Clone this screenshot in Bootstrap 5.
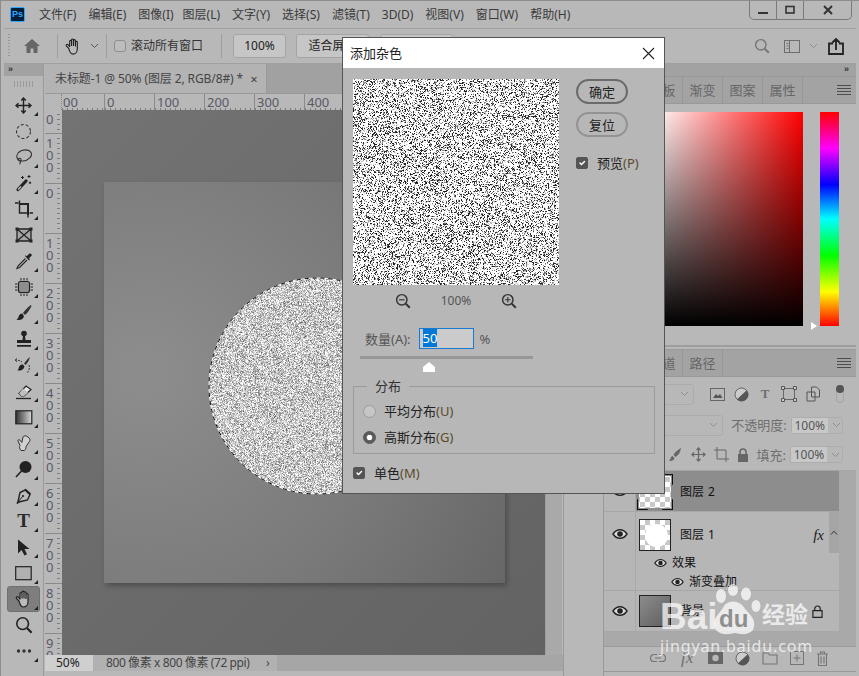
<!DOCTYPE html>
<html lang="zh-CN">
<head>
    <meta charset="UTF-8">
    <title>添加杂色</title>
    <link href="https://cdn.jsdelivr.net/npm/bootstrap@5.3.0/dist/css/bootstrap.min.css" rel="stylesheet">
    <style>
        html, body { margin: 0; background: #b8b8b8; overflow: hidden; }
        body { font: 12px/16px "Noto Sans", "Noto Sans CJK SC", sans-serif; color: #333; }
        svg { display: block; flex: none; }
        .ps-win { position: relative; width: 859px; height: 676px; overflow: hidden; background: #b8b8b8; border: 1px solid #8d8d8d; border-width: 1px 0 0 1px; }

        /* title bar */
        .titlebar { height: 27px; padding-left: 9px; }
        .ps-logo { width: 15px; height: 15px; background: #001e36; border: 1px solid #31a8ff; border-radius: 2px; color: #31a8ff; font: bold 9px/13px "Liberation Sans", sans-serif; text-align: center; margin-right: 14px; }
        .menu { gap: 12px; color: #3a3a3a; margin-top: 1px; }
        .menu .tight { margin-right: -3px; }
        .win-btns { margin: -1px 7px 0 auto; height: 20px; border: 1px solid #7a7a7a; border-top: 0; border-radius: 0 0 5px 5px; align-self: flex-start; }
        .win-btns > div { height: 19px; border-right: 1px solid #7a7a7a; width: 27px; }
        .win-btns > div:last-child { border-right: 0; width: 47px; }

        /* options bar */
        .optbar { height: 36px; margin: 0 3px; border: 1px solid #a0a0a0; border-width: 1px 0; }
        .grip { width: 2px; height: 24px; margin-left: 4px; background: repeating-linear-gradient(#969696 0 1px, transparent 1px 3px); }
        .sep { width: 1px; height: 24px; background: #9e9e9e; }
        .pbtn { height: 24px; border: 1px solid #a4a4a4; border-radius: 3px; background: #c6c6c6; color: #222; text-align: center; line-height: 22px; }
        .home { margin: 0 16px 0 13px; }
        .hand-opt { margin: 0 7px 0 6px; }
        .chev { margin-right: 7px; }
        .optbar .form-check-input { flex: none; width: 12px; height: 12px; margin: 0 5px 0 7px; background-color: #bdbdbd; border-color: #8e8e8e; border-radius: 3px; }
        .optbar .sep2 { margin: 0 11px 0 18px; }
        .b100 { width: 53px; margin-right: 10px; }
        .bfit { width: 73px; margin-right: 11px; }
        .opt-right { margin-left: auto; margin-right: 12px; }
        .opt-search { margin-right: 14px; }
        .opt-ws { margin-right: 9px; }
        .opt-chev { margin-right: 10px; }

        /* main row */
        .mainrow { height: 612px; margin-left: 3px; }
        .toolcol { width: 40px; border-right: 1px solid #9a9a9a; }
        .dock-head { height: 12px; background: #a2a2a2; color: #333; font: bold 9px/11px "Liberation Sans", sans-serif; letter-spacing: -1px; padding-left: 4px; }
        .toolgrip { height: 16px; }
        .toolgrip i { width: 20px; height: 6px; background: repeating-linear-gradient(90deg, #9a9a9a 0 1px, transparent 1px 3px); }
        .tool { height: 26px; position: relative; width: 33px; margin-left: 3px; border-radius: 3px; border: 1px solid transparent; }
        .tool.more::after { content: ""; position: absolute; right: 1px; bottom: 1px; border: 2px solid transparent; border-right-color: #222; border-bottom-color: #222; }
        .tool.active { background: #7e7e7e; border-color: #6f6f6f; }
        .t-letter { font: bold 19px/20px "Liberation Serif", serif; color: #2a2a2a; }

        .docarea { width: 518px; margin-left: 1px; }
        .doctabs { height: 29px; background: #a1a1a1; }
        .doctab { width: 222px; background: #b3b3b3; padding-left: 10px; color: #444; border-right: 1px solid #999; letter-spacing: -.1px; }
        .doctab span + span { margin-left: 7px; font-size: 13px; }
        .hruler { height: 17px; background: #b8b8b8; border-top: 1px solid #999; }
        .rcorner { width: 17px; background: #b8b8b8; border-right: 1px dotted #888; }
        .htick { background: repeating-linear-gradient(90deg, #7d7d7d 0 1px, transparent 1px 5px) bottom left / 100% 2px no-repeat; }
        .h-first { width: 42px; padding-left: 1px; }
        .h-cell { width: 50px; border-left: 1px solid #8a8a8a; padding-left: 2px; }
        .hruler span { font-size: 13px; line-height: 16px; color: #5a5966; }
        .docbody { height: 545px; }
        .vruler { width: 17px; overflow: hidden; background: #b8b8b8; }
        .v-cell { height: 50px; border-top: 1px solid #8a8a8a; padding-left: 1px; font-size: 13px; line-height: 12px; color: #5a5966;
                  background: repeating-linear-gradient(#7d7d7d 0 1px, transparent 1px 5px) right 2px top 4px / 3px 100% no-repeat; }
        .v-first { height: 23px; border-top: 0; }
        .v-digit { padding-top: 3px; }
        .canvasarea { width: 483px; background: linear-gradient(135deg, #737373, #636363); padding: 72px 0 0 42px; overflow: hidden; }
        .doc { position: relative; width: 401px; height: 401px; box-shadow: 2px 3px 5px rgba(0,0,0,.25); }
        .doc canvas { position: absolute; left: 0; top: 0; }
        .vscroll { width: 17px; background: #a9a9a9; border-left: 1px solid #9d9d9d; }
        .statusbar { height: 16px; background: #a6a6a6; }
        .st-zoom { width: 48px; background: #cfcfcf; color: #222; padding-left: 11px; }
        .st-info { width: 184px; background: #b1b1b1; color: #444; padding-left: 13px; letter-spacing: -.4px; }
        .st-next { margin-left: -11px; color: #444; }

        .midstrip { width: 41px; border-left: 1px solid #9a9a9a; border-right: 1px solid #9a9a9a; }

        /* right panels */
        .rightcol { width: 252px; }
        .ptabs { height: 28px; background: #a3a3a3; border-top: 1px solid #999; border-bottom: 1px solid #999; color: #666; }
        .ptab { width: 40px; text-align: center; border-right: 1px solid #979797; font-size: 13px; line-height: 27px; }
        .pad-left { width: 39px; }
        .p-menu { margin: 0 4px 0 auto; }
        .colorpanel { height: 243px; padding: 8px 0 0 48px; border-bottom: 2px solid #9d9d9d; }
        .sv { width: 151px; height: 214px; background: linear-gradient(transparent, #000), linear-gradient(90deg, #fff, #f00); }
        .hue { position: relative; width: 19px; height: 214px; margin-left: 17px; background: linear-gradient(#f00, #f0f 17%, #00f 34%, #0ff 50%, #0f0 67%, #ff0 84%, #f00); }
        .hue::after { content: ""; position: absolute; left: -9px; bottom: -4px; border: 4px solid transparent; border-left: 6px solid #fff; }
        .gapline { height: 2px; }
        .l-tabs { height: 28px; }
        .l-row1 { height: 34px; }
        .l-row2 { height: 28px; }
        .l-row3 { height: 32px; border-bottom: 1px solid #a5a5a5; }
        .sel { height: 21px; border: 1px solid #ababab; border-radius: 3px; }
        .sel1 { width: 90px; }
        .sel2 { width: 121px; }
        .l-icons { margin-left: 11px; }
        .icell { width: 24px; }
        .lbl { color: #6e6e6e; font-size: 13px; }
        .numbox { height: 17px; border: 1px solid #adadad; border-radius: 2px; width: 53px; margin: 0 13px 0 4px; color: #555; }
        .numbox span { width: 36px; background: #c8c8c8; text-align: center; line-height: 15px; }
        .pill { width: 8px; height: 18px; border-radius: 5px; border: 1px solid #a5a5a5; position: relative; margin-left: 11px; }
        .pill::before { content: ""; position: absolute; top: -1px; left: -1px; width: 8px; height: 8px; border-radius: 50%; background: #555; }

        .layers { height: 175px; background: #b6b6b6; }
        .layer-list { width: 235px; border-right: 0; }
        .lscroll { width: 17px; background: #a9a9a9; }
        .lrow { border-bottom: 1px solid #a7a7a7; }
        .eyecol { width: 32px; border-right: 1px solid #a9a9a9; }
        .lr-sel { height: 41px; }
        .lr-sel .lbody { background: #8d8d8d; padding-top: 2px; }
        .lr-fx { height: 79px; }
        .lr-bg { height: 41px; }
        .lbody { height: 100%; padding-left: 3px; color: #111; position: relative; }
        .thumb { position: relative; width: 32px; height: 32px; border: 1px solid #222; margin-right: 9px; }
        .thumb.picked { border-color: transparent; }
        .thumb.picked::after { content: ""; position: absolute; inset: -3px; border: 1px solid #111; clip-path: polygon(0 0, 30% 0, 30% 8%, 70% 8%, 70% 0, 100% 0, 100% 30%, 92% 30%, 92% 70%, 100% 70%, 100% 100%, 70% 100%, 70% 92%, 30% 92%, 30% 100%, 0 100%, 0 70%, 8% 70%, 8% 30%, 0 30%); }
        .checker { background: repeating-conic-gradient(#c8c8c8 0 25%, #fff 0 50%) 0 0 / 10px 10px; }
        .thumb-spot { background: radial-gradient(circle at 55% 52%, #fff 0 11px, transparent 12px), repeating-conic-gradient(#c8c8c8 0 25%, #fff 0 50%) 0 0 / 10px 10px; }
        .thumb-grad { background: linear-gradient(135deg, #8c8c8c, #5e5e5e); }
        .lname b { font-weight: 400; margin-left: 4px; }
        .fxmark { margin-left: auto; font: italic 15px/16px "Liberation Serif", serif; color: #222; margin-right: 5px; }
        .fxarrow { width: 10px; height: 41px; background: #a5a5a5; }
        .fxsub { padding-left: 18px; color: #111; height: 19px; }
        .fxsub.two { padding-left: 35px; }
        .fxsub svg { margin-right: 5px; }
        .lfoot { height: 26px; padding-bottom: 2px; border-top: 1px solid #9a9a9a; border-bottom: 1px solid #9a9a9a; gap: 12px; padding-left: 46px; }
        .lfoot .fxmark { color: #6f6f6f; margin: 0 3px 0 3px; font-size: 17px; }
        .lempty { background: #a9a9a9; flex: 1; }

        /* the filter dialog */
        .dialog { position: absolute; left: 341px; top: 36px; width: 323px; height: 457px; background: #b7b7b7; border: 1px solid #555; z-index: 5; }
        .dlg-title { height: 30px; background: #fff; padding: 0 9px 0 7px; font-size: 13px; color: #222; }
        .dlg-top { padding: 11px 0 0 10px; }
        .preview { width: 206px; height: 206px; display: block; }
        .dlg-side { margin-left: 17px; width: 64px; }
        .rbtn { display: block; width: 52px; height: 25px; padding: 0; font-size: 13px; line-height: 20px; color: #222; background: transparent; border-radius: 13px; }
        .rbtn.primary { border: 2px solid #6b6b6b; }
        .rbtn.plain { border: 2px solid #939393; margin-top: 8px; }
        .dialog .form-check-input { flex: none; width: 12px; height: 12px; margin: 0; border-radius: 2px; }
        .dialog .form-check-input:checked { background-color: #555; border-color: #555; }
        .c-mn { color: #5b4a2a; }
        .check-row { margin-top: 18px; gap: 9px; color: #222; white-space: nowrap; font-size: 13px; }
        .zoomrow { width: 206px; height: 16px; margin: 8px 0 0 10px; padding: 0 42px; color: #555; font-size: 12px; }
        .amount { margin: 19px 0 0 22px; height: 21px; color: #555; font-size: 13px; }
        .amount .numin { width: 55px; height: 21px; margin: 0 6px 0 8px; border: 1px solid #1a7ad0; background: #cbcbcb; padding: 0 0 0 3px; line-height: 19px; font-size: 13px; }
        .numin mark { padding: 0; background: #0078d7; color: #fff; }
        .track { width: 173px; height: 3px; background: #979797; margin: 7px 0 0 17px; }
        .thumbtri { width: 12px; height: 10px; margin: 3px 0 0 80px; background: #fff; clip-path: polygon(50% 0, 100% 50%, 100% 100%, 0 100%, 0 50%); }
        .dist { position: relative; margin: 14px 9px 0 10px; height: 68px; border: 1px solid #9b9b9b; padding: 11px 0 0 9px; }
        .dist legend { position: absolute; float: none; left: 13px; top: -9px; width: auto; margin: 0; padding: 0 8px; background: #b7b7b7; font-size: 13px; line-height: 16px; color: #333; }
        .radio-row { height: 26px; gap: 8px; color: #222; font-size: 13px; }
        .radio { width: 13px !important; height: 13px !important; border-radius: 50% !important; background-color: #c6c6c6; border: 1px solid #9c9c9c; }
        .radio:checked { background-color: #5a5a5a !important; border-color: #5a5a5a !important; }
        .mono-row { margin: 11px 0 0 10px; }

        /* baidu watermark */
        .watermark { position: absolute; left: 659px; top: 583px; width: 160px; z-index: 6; color: rgba(255,255,255,.72); pointer-events: none; }
        .wm-top { height: 53px; }
        .wm-bai { position: absolute; left: 0; top: 13px; font: bold 37px/40px "Liberation Sans", sans-serif; }
        .wm-paw { position: absolute; left: 50px; top: 0; }
        .wm-jy { position: absolute; left: 102px; top: 15px; font: bold 23px/28px "Noto Sans CJK SC", sans-serif; }
        .wm-url { font: 16px/18px "Noto Sans", sans-serif; letter-spacing: .85px; white-space: nowrap; }
    </style>
</head>
<body>
<svg width="0" height="0" style="position:absolute">
    <symbol id="hand" viewBox="0 0 20 20"><path d="M5 12 2.600 9.500c-1-1.200.5-2.400 1.600-1.400L6 10V4.600c0-1.400 2-1.400 2 0V9 3.200c0-1.500 2-1.500 2 0V9 3.800c0-1.400 2-1.400 2 0V9.400 5.600c0-1.300 2-1.300 2 0v7.200c0 3-2 5.200-4.600 5.200-2.300 0-3.300-1.300-4.400-6z" fill="#bbb" stroke="#222" stroke-width="1.200" stroke-linejoin="round"/></symbol>
    <symbol id="eye" viewBox="0 0 16 12"><path d="M1 6c2-3 4.500-4.300 7-4.300S13 3 15 6c-2 3-4.500 4.300-7 4.300S3 9 1 6z" fill="#ddd" stroke="#222" stroke-width="1.400"/><circle cx="8" cy="6" r="2.800" fill="#222"/></symbol>
    <symbol id="mag" viewBox="0 0 20 20"><circle cx="8.500" cy="8.500" r="6.500" fill="none" stroke="currentColor" stroke-width="1.800"/><path d="M13.500 13.500 18.500 18.500" stroke="currentColor" stroke-width="2.400"/></symbol>
    <symbol id="menuic" viewBox="0 0 16 12"><path d="M1 1.500h14M1 4.500h14M1 7.500h14M1 10.500h14" stroke="#4d4d4d" stroke-width="1"/></symbol>
</svg>
<div class="ps-win d-flex flex-column">
    <!-- title bar + menus -->
    <div class="titlebar d-flex align-items-center">
        <div class="ps-logo">Ps</div>
        <div class="menu d-flex">
            <span>文件(F)</span><span>编辑(E)</span><span class="tight">图像(I)</span><span>图层(L)</span><span>文字(Y)</span><span>选择(S)</span><span>滤镜(T)</span><span>3D(D)</span><span>视图(V)</span><span>窗口(W)</span><span>帮助(H)</span>
        </div>
        <div class="win-btns d-flex">
            <div class="d-flex align-items-center justify-content-center"><svg width="12" height="12"><rect x="1" y="8" width="10" height="2" fill="#333"/></svg></div>
            <div class="d-flex align-items-center justify-content-center"><svg width="12" height="12"><rect x="2" y="2.500" width="8" height="6.500" fill="none" stroke="#333" stroke-width="1.600"/></svg></div>
            <div class="d-flex align-items-center justify-content-center"><svg width="12" height="12"><path d="M2 2 10 10M10 2 2 10" stroke="#333" stroke-width="2"/></svg></div>
        </div>
    </div>

    <!-- options bar -->
    <div class="optbar d-flex align-items-center">
        <div class="grip"></div>
        <svg class="home" width="18" height="16" viewBox="0 0 18 16"><path d="M9 1 1 8h2.500v7h4v-4.500h3V15h4V8H17z" fill="#666"/></svg>
        <div class="sep"></div>
        <svg class="hand-opt" width="19" height="19"><use href="#hand"/></svg>
        <svg class="chev" width="9" height="6" viewBox="0 0 9 6"><path d="M1 1 4.500 4.500 8 1" fill="none" stroke="#555"/></svg>
        <div class="sep"></div>
        <input class="form-check-input" type="checkbox">
        <span class="text-nowrap">滚动所有窗口</span>
        <div class="sep sep2"></div>
        <div class="pbtn b100">100%</div>
        <div class="pbtn bfit">适合屏幕</div>
        <div class="pbtn bfit">填充屏幕</div>
        <div class="opt-right d-flex align-items-center">
            <svg class="opt-search" width="16" height="16" style="color:#777"><use href="#mag"/></svg>
            <svg class="opt-ws" width="16" height="13" viewBox="0 0 16 13"><rect x=".5" y=".5" width="15" height="12" fill="none" stroke="#6e6e6e"/><path d="M2.500 3.500h2M2.500 6h2M2.500 8.500h2M5.500 1v11" stroke="#6e6e6e"/></svg>
            <svg class="opt-chev" width="9" height="6" viewBox="0 0 9 6"><path d="M1 1 4.500 4.500 8 1" fill="none" stroke="#8e8e8e"/></svg>
            <svg width="16" height="17" viewBox="0 0 16 17"><path d="M5 5.500H1v10.500h14V5.500h-4M8 12V1.500M4.500 4.500 8 1l3.500 3.500" fill="none" stroke="#222" stroke-width="1.800"/></svg>
        </div>
    </div>

    <div class="mainrow d-flex">
        <!-- tools -->
        <div class="toolcol d-flex flex-column">
            <div class="dock-head">››</div>
            <div class="toolgrip d-flex align-items-center justify-content-center"><i></i></div>
            <div class="tool more d-flex align-items-center justify-content-center"><svg width="17" height="17" viewBox="0 0 17 17"><path d="M8.500 1v15M1 8.500h15M6.300 3.500 8.500 1l2.200 2.500M6.300 13.500l2.200 2.500 2.200-2.500M3.500 6.300 1 8.500l2.500 2.200M13.500 6.300 16 8.500l-2.500 2.200" fill="none" stroke="#222" stroke-width="1.400"/></svg></div>
            <div class="tool more d-flex align-items-center justify-content-center"><svg width="17" height="17" viewBox="0 0 17 17"><circle cx="8.500" cy="8.500" r="7" fill="none" stroke="#333" stroke-width="1.100" stroke-dasharray="3 2"/></svg></div>
            <div class="tool more d-flex align-items-center justify-content-center"><svg width="18" height="18" viewBox="0 0 18 18"><path d="M4.500 13C1.500 11 .8 7.500 3.500 4.500 7 1 14 1 16 4.500S13.500 12.500 8 13c-2 .2-4 0-4.500-1.500-.3-1.200 2-1.800 2.500-.2.400 1.500-.5 3-1.500 5" fill="none" stroke="#333" stroke-width="1.100"/></svg></div>
            <div class="tool more d-flex align-items-center justify-content-center"><svg width="18" height="18" viewBox="0 0 18 18"><path d="M3 15.500 11 7" stroke="#222" stroke-width="3.200" stroke-linecap="round"/><path d="M3 15.500 6 12.300" stroke="#ccc" stroke-width="1.200"/><path d="M7.500 2v3M6 3.500h3M14 1v3M12.500 2.500h3M15 7.500v2.500M13.800 8.800h2.400" stroke="#222"/></svg></div>
            <div class="tool more d-flex align-items-center justify-content-center"><svg width="20" height="18" viewBox="0 0 20 18"><path d="M1 3h3.500M5.500 .5V13h10" fill="none" stroke="#222" stroke-width="1.400"/><path d="M5.500 4H14v11" fill="none" stroke="#222" stroke-width="2"/><path d="M14 14.500V17.500M16 13h3" stroke="#222" stroke-width="1.400"/></svg></div>
            <div class="tool d-flex align-items-center justify-content-center"><svg width="18" height="16" viewBox="0 0 18 16"><path d="M2 2h14v12H2zM2 2l14 12M16 2 2 14" fill="#a5a5a5" stroke="#222" stroke-width="1.300"/><path d="M.5.500h3v3h-3zM14.500.500h3v3h-3zM.5 12.500h3v3h-3zM14.500 12.500h3v3h-3z" fill="#222"/></svg></div>
            <div class="tool more d-flex align-items-center justify-content-center"><svg width="18" height="18" viewBox="0 0 18 18"><path d="M10.500 6.500 3 14l-1 2.500L4.500 15.500 12 8" fill="#cfcfcf" stroke="#222" stroke-width="1.200"/><path d="M10 4 14 8.500l1-1.300-1-1 2.500-2.500c1-1.300-1-3-2.300-2l-2.500 2.500-1-1z" fill="#222"/></svg></div>
            <div class="tool more d-flex align-items-center justify-content-center"><svg width="18" height="18" viewBox="0 0 18 18"><rect x="3.500" y="3.500" width="11" height="11" rx="2" fill="#8e8e8e" stroke="#222" stroke-width="1.100"/><path d="M6 0v2.500M9 0v2.500M12 0v2.500M6 15.500V18M9 15.500V18M12 15.500V18M0 6h2.500M0 9h2.500M0 12h2.500M15.500 6H18M15.500 9H18M15.500 12H18" stroke="#222"/></svg></div>
            <div class="tool more d-flex align-items-center justify-content-center"><svg width="18" height="18" viewBox="0 0 18 18"><path d="M16 1c-2.500 1.500-6 5-8 8l2 2c2.500-2.200 5-5.500 6.500-9z" fill="#333"/><path d="M7.500 9.500C5 9.500 4 11 3.500 13c-.3 1.300-1 2-2 2.500 2.500 1.200 6.500.5 7.500-3z" fill="#222"/></svg></div>
            <div class="tool more d-flex align-items-center justify-content-center"><svg width="18" height="18" viewBox="0 0 18 18"><circle cx="9" cy="3.500" r="2.800" fill="#222"/><path d="M8 5.500h2L10.500 10H16v3H2v-3h5.500zM2 15h14v1.800H2z" fill="#222"/></svg></div>
            <div class="tool more d-flex align-items-center justify-content-center"><svg width="19" height="19" viewBox="0 0 19 19"><path d="M16 1c-2 1.500-4.500 4-6 6.500l1.500 1.500C13.500 7.500 15 4.500 16 1z" fill="#333"/><path d="M9 8.500c-2-.5-3.500 1-4 2.500-.3 1.500-.8 2.500-1.500 3.500 3 .5 6-.5 7-4z" fill="#222"/><path d="M1 4c3 0 5 .5 7 2M3 2.500 1 4l2 2M15 9c1 3 0 6-2 8" fill="none" stroke="#333" stroke-dasharray="2 1"/></svg></div>
            <div class="tool more d-flex align-items-center justify-content-center"><svg width="18" height="17" viewBox="0 0 18 17"><path d="M4 10.500 11 3l5 3.500-7 6.500H6.500z" fill="#e8e8e8" stroke="#222" stroke-width="1.200"/><path d="M4 10.500 8 5.500l5 4-4 3.500H6.500z" fill="#c0c0c0"/><path d="M1 15.500h15" stroke="#222" stroke-width="1.300"/></svg></div>
            <div class="tool more d-flex align-items-center justify-content-center"><svg width="18" height="15" viewBox="0 0 18 15"><defs><linearGradient id="gr"><stop offset="0" stop-color="#333"/><stop offset="1" stop-color="#d8d8d8"/></linearGradient></defs><rect x=".8" y=".8" width="16" height="13" fill="url(#gr)" stroke="#222" stroke-width="1.200"/></svg></div>
            <div class="tool more d-flex align-items-center justify-content-center"><svg width="16" height="18" viewBox="0 0 16 18"><path d="M5 16.500c-1.500-2-2-3.500-1-5L2 7c-.5-1 1-2 1.800-1l2 2.500L7 3c.5-1.500 3-1.500 5 0s2.500 3 1.500 4.500L10 12.500c0 2-.5 3-1.500 4z" fill="#d0d0d0" stroke="#333"/></svg></div>
            <div class="tool more d-flex align-items-center justify-content-center"><svg width="18" height="18" viewBox="0 0 18 18"><circle cx="10.500" cy="7" r="6" fill="#222"/><path d="M6.500 11 1 17" stroke="#222" stroke-width="1.600"/></svg></div>
            <div class="tool more d-flex align-items-center justify-content-center"><svg width="17" height="17" viewBox="0 0 17 17"><path d="M10 3 15 7.500 12.500 13 4 15l-2 1.500L3 14.500 5 5.500z" fill="#bbb" stroke="#222" stroke-width="1.400"/><path d="M10.500 1.500 16 6.500 14.500 8 9.500 3z" fill="#222"/><path d="M3 15 7.500 9.500" stroke="#222"/><circle cx="8" cy="9" r="1.100" fill="#222"/></svg></div>
            <div class="tool more d-flex align-items-center justify-content-center"><span class="t-letter">T</span></div>
            <div class="tool more d-flex align-items-center justify-content-center"><svg width="13" height="17" viewBox="0 0 13 17"><path d="M1 .5v14l3.500-3.500 3 5.500 2.500-1.300L7.500 10H12.500z" fill="#222"/></svg></div>
            <div class="tool more d-flex align-items-center justify-content-center"><svg width="17" height="15" viewBox="0 0 17 15"><rect x=".7" y=".7" width="15.500" height="13" fill="#b0b0b0" stroke="#222" stroke-width="1.200"/></svg></div>
            <div class="tool more active d-flex align-items-center justify-content-center"><svg width="20" height="20"><use href="#hand"/></svg></div>
            <div class="tool d-flex align-items-center justify-content-center"><svg width="18" height="18" style="color:#222"><use href="#mag"/></svg></div>
            <div class="tool more d-flex align-items-center justify-content-center"><svg width="16" height="4" viewBox="0 0 16 4"><circle cx="2.500" cy="2" r="1.700" fill="#333"/><circle cx="8" cy="2" r="1.700" fill="#333"/><circle cx="13.500" cy="2" r="1.700" fill="#333"/></svg></div>
        </div>

        <!-- document window -->
        <div class="docarea d-flex flex-column">
            <div class="doctabs d-flex">
                <div class="doctab d-flex align-items-center"><span>未标题-1 @ 50% (图层 2, RGB/8#) *</span><span>×</span></div>
            </div>
            <div class="hruler d-flex">
                <div class="rcorner"></div>
                <div class="h-first htick"><span>00</span></div>
                <div class="h-cell htick"><span>0</span></div>
                <div class="h-cell htick"><span>100</span></div>
                <div class="h-cell htick"><span>200</span></div>
                <div class="h-cell htick"><span>300</span></div>
                <div class="h-cell htick"><span>400</span></div>
                <div class="h-cell htick"><span>500</span></div>
            </div>
            <div class="docbody d-flex">
                <div class="vruler">
                    <div class="v-cell v-first"><div class="v-digit">0</div></div>
                    <div class="v-cell"><div class="v-digit">1<br>0<br>0</div></div>
                    <div class="v-cell"><div class="v-digit">0</div></div>
                    <div class="v-cell"><div class="v-digit">1<br>0<br>0</div></div>
                    <div class="v-cell"><div class="v-digit">2<br>0<br>0</div></div>
                    <div class="v-cell"><div class="v-digit">3<br>0<br>0</div></div>
                    <div class="v-cell"><div class="v-digit">4<br>0<br>0</div></div>
                    <div class="v-cell"><div class="v-digit">5<br>0<br>0</div></div>
                    <div class="v-cell"><div class="v-digit">6<br>0<br>0</div></div>
                    <div class="v-cell"><div class="v-digit">7<br>0<br>0</div></div>
                    <div class="v-cell"><div class="v-digit">8<br>0<br>0</div></div>
                    <div class="v-cell"><div class="v-digit">9<br>0<br>0</div></div>
                </div>
                <div class="canvasarea">
                    <div class="doc"><canvas id="docCanvas" width="401" height="401"></canvas></div>
                </div>
                <div class="vscroll"></div>
            </div>
            <div class="statusbar d-flex">
                <div class="st-zoom">50%</div>
                <div class="st-info text-nowrap">800 像素 x 800 像素 (72 ppi)</div>
                <div class="st-next">›</div>
            </div>
        </div>

        <div class="midstrip"></div>

        <!-- right panels -->
        <div class="rightcol d-flex flex-column">
            <div class="dock-head d-flex justify-content-end pe-2">››</div>
            <div class="ptabs d-flex align-items-stretch">
                <div class="pad-left"></div>
                <div class="ptab">色板</div><div class="ptab">渐变</div><div class="ptab">图案</div><div class="ptab">属性</div>
                <svg class="p-menu align-self-center" width="16" height="12"><use href="#menuic"/></svg>
            </div>
            <div class="colorpanel d-flex">
                <div class="sv"></div>
                <div class="hue"></div>
            </div>
            <div class="gapline"></div>
            <div class="ptabs l-tabs d-flex align-items-stretch">
                <div class="pad-left"></div>
                <div class="ptab">通道</div>
                <div class="ptab">路径</div>
                <svg class="p-menu align-self-center" width="16" height="12"><use href="#menuic"/></svg>
            </div>
            <!-- layer filter row -->
            <div class="l-row1 d-flex align-items-center">
                <div class="sel sel1 d-flex align-items-center justify-content-end pe-1"><svg width="9" height="6" viewBox="0 0 9 6"><path d="M1 1 4.500 4.500 8 1" fill="none" stroke="#8e8e8e"/></svg></div>
                <div class="l-icons d-flex align-items-center">
                    <div class="icell d-flex justify-content-center"><svg width="15" height="13" viewBox="0 0 15 13"><rect x=".5" y=".5" width="14" height="12" fill="none" stroke="#666"/><path d="M3 10 6 6l2 2 2-2 2.500 4z" fill="#555"/></svg></div>
                    <div class="icell d-flex justify-content-center"><svg width="15" height="15" viewBox="0 0 15 15"><circle cx="7.500" cy="7.500" r="6.500" fill="#ccc" stroke="#666"/><path d="M12.500 3.400A6.500 6.500 0 0 1 3 12.300z" fill="#555"/></svg></div>
                    <div class="icell d-flex justify-content-center"><span class="t-letter lbl">T</span></div>
                    <div class="icell d-flex justify-content-center"><svg width="16" height="16" viewBox="0 0 16 16"><rect x="2.500" y="2.500" width="11" height="11" fill="none" stroke="#666"/><path d="M.5.500h3v3h-3zM12.500.500h3v3h-3zM.5 12.500h3v3h-3zM12.500 12.500h3v3h-3z" fill="#ccc" stroke="#555"/></svg></div>
                    <div class="icell d-flex justify-content-center"><svg width="15" height="16" viewBox="0 0 15 16"><path d="M5.500 1h5l3 3v7h-8zM1 6h8v9H1z" fill="#bbb" stroke="#555"/></svg></div>
                </div>
                <div class="pill"></div>
            </div>
            <!-- opacity row -->
            <div class="l-row2 d-flex align-items-center">
                <div class="sel sel2 d-flex align-items-center justify-content-end pe-1"><svg width="9" height="6" viewBox="0 0 9 6"><path d="M1 1 4.500 4.500 8 1" fill="none" stroke="#8e8e8e"/></svg></div>
                <span class="lbl ms-2 text-nowrap">不透明度:</span>
                <div class="numbox d-flex align-items-center"><span>100%</span><svg class="ms-1" width="9" height="6" viewBox="0 0 9 6"><path d="M1 1 4.500 4.500 8 1" fill="none" stroke="#8e8e8e"/></svg></div>
            </div>
            <!-- lock row -->
            <div class="l-row3 d-flex align-items-center">
                <svg class="ms-auto" width="15" height="15" viewBox="0 0 15 15"><path d="M13 1C9 3 6.500 6 5.500 8l2 2c2.500-1.500 5-4.500 5.500-9zM4.500 9c-1.500.5-2 2-2 3l-1.500 2c3 .5 5-1 5.500-3z" fill="#666"/></svg>
                <svg class="ms-2" width="15" height="15" viewBox="0 0 17 17"><path d="M8.500 1v15M1 8.500h15M6.300 3.500 8.500 1l2.200 2.500M6.300 13.500l2.200 2.500 2.200-2.500M3.500 6.300 1 8.500l2.500 2.200M13.500 6.300 16 8.500l-2.500 2.200" fill="none" stroke="#666" stroke-width="1.400"/></svg>
                <svg class="ms-2" width="15" height="15" viewBox="0 0 15 15"><path d="M0 3h12v12M3 0v12h12" fill="none" stroke="#666"/></svg>
                <svg class="ms-2" width="12" height="14" viewBox="0 0 12 14"><path d="M3 6V4a3 3 0 0 1 6 0v2" fill="none" stroke="#666" stroke-width="1.500"/><path d="M1 6h10v8H1z" fill="#666"/></svg>
                <span class="lbl ms-2 text-nowrap">填充:</span>
                <div class="numbox d-flex align-items-center"><span>100%</span><svg class="ms-1" width="9" height="6" viewBox="0 0 9 6"><path d="M1 1 4.500 4.500 8 1" fill="none" stroke="#8e8e8e"/></svg></div>
            </div>
            <!-- layers -->
            <div class="layers d-flex">
                <div class="layer-list d-flex flex-column">
                    <div class="lrow lr-sel d-flex">
                        <div class="eyecol d-flex align-items-center justify-content-center"><svg width="16" height="12"><use href="#eye"/></svg></div>
                        <div class="lbody flex-grow-1 d-flex align-items-center"><div class="thumb picked checker"></div><span class="lname">图层<b>2</b></span></div>
                    </div>
                    <div class="lrow lr-fx d-flex">
                        <div class="eyecol d-flex justify-content-center pt-3"><svg width="16" height="12"><use href="#eye"/></svg></div>
                        <div class="flex-grow-1">
                            <div class="d-flex align-items-center">
                                <div class="lbody flex-grow-1 d-flex align-items-center pt-1"><div class="thumb thumb-spot"></div><span class="lname">图层<b>1</b></span><span class="fxmark">fx</span></div>
                                <div class="fxarrow d-flex align-items-center justify-content-center"><svg width="8" height="5" viewBox="0 0 8 5"><path d="M1 4.500 4 1.200 7 4.500" fill="none" stroke="#333"/></svg></div>
                            </div>
                            <div class="fxsub d-flex align-items-center"><svg width="13" height="10"><use href="#eye"/></svg>效果</div>
                            <div class="fxsub two d-flex align-items-center"><svg width="13" height="10"><use href="#eye"/></svg>渐变叠加</div>
                        </div>
                    </div>
                    <div class="lrow lr-bg d-flex">
                        <div class="eyecol d-flex align-items-center justify-content-center"><svg width="16" height="12"><use href="#eye"/></svg></div>
                        <div class="lbody flex-grow-1 d-flex align-items-center"><div class="thumb thumb-grad"></div><span class="lname">背景</span>
                            <svg class="ms-auto me-3" width="11" height="13" viewBox="0 0 12 14"><path d="M3 6V4a3 3 0 0 1 6 0v2" fill="none" stroke="#222" stroke-width="1.300"/><path d="M1 6h10v7.500H1z" fill="none" stroke="#222" stroke-width="1.300"/></svg>
                        </div>
                    </div>
                    <div class="lempty"></div>
                </div>
                <div class="lscroll"></div>
            </div>
            <div class="lfoot d-flex align-items-center">
                <svg width="16" height="10" viewBox="0 0 16 10"><path d="M7 1.500H4a3.500 3.500 0 0 0 0 7h3M9 1.500h3a3.500 3.500 0 0 1 0 7H9M5 5h6" fill="none" stroke="#757575" stroke-width="1.200"/></svg>
                <span class="fxmark">fx</span>
                <svg width="15" height="12" viewBox="0 0 15 12"><path d="M0 0h15v12H0z" fill="#666"/><circle cx="7.500" cy="6" r="3.200" fill="#b8b8b8"/></svg>
                <svg width="15" height="15" viewBox="0 0 15 15"><circle cx="7.500" cy="7.500" r="6.500" fill="#ccc" stroke="#666"/><path d="M12.500 3.400A6.500 6.500 0 0 1 3 12.300z" fill="#555"/></svg>
                <svg width="16" height="13" viewBox="0 0 16 13"><path d="M1 1h5l1.500 2H15v9H1z" fill="none" stroke="#757575" stroke-width="1.100"/></svg>
                <svg width="14" height="14" viewBox="0 0 14 14"><rect x=".5" y=".5" width="13" height="13" fill="none" stroke="#757575"/><path d="M7 3.500v7M3.500 7h7" stroke="#757575"/></svg>
                <svg width="13" height="15" viewBox="0 0 13 15"><path d="M1 3h11M4.500 3V1h4v2M2.500 3v11.500h8V3M5 5.500v7M8 5.500v7" fill="none" stroke="#757575" stroke-width="1.100"/></svg>
            </div>
        </div>
    </div>

    <!-- filter dialog -->
    <div class="dialog">
        <div class="dlg-title d-flex align-items-center justify-content-between">
            <span>添加杂色</span>
            <svg width="13" height="13" viewBox="0 0 13 13"><path d="M1 1 12 12M12 1 1 12" stroke="#222" stroke-width="1.100"/></svg>
        </div>
        <div class="dlg-top d-flex">
            <canvas id="preview" class="preview" width="206" height="206"></canvas>
            <div class="dlg-side">
                <button class="btn rbtn primary" type="button">确定</button>
                <button class="btn rbtn plain" type="button">复位</button>
                <label class="check-row d-flex align-items-center"><input class="form-check-input" type="checkbox" checked><span>预览<span class="c-mn">(P)</span></span></label>
            </div>
        </div>
        <div class="zoomrow d-flex align-items-center justify-content-between">
            <svg width="16" height="16" viewBox="0 0 20 20"><circle cx="8.500" cy="8.500" r="6.500" fill="none" stroke="#333" stroke-width="1.800"/><path d="M13.500 13.500 18.500 18.500" stroke="#333" stroke-width="2.400"/><path d="M5 8.500h7" stroke="#333" stroke-width="1.400"/></svg>
            <span>100%</span>
            <svg width="16" height="16" viewBox="0 0 20 20"><circle cx="8.500" cy="8.500" r="6.500" fill="none" stroke="#333" stroke-width="1.800"/><path d="M13.500 13.500 18.500 18.500" stroke="#333" stroke-width="2.400"/><path d="M5 8.500h7M8.500 5v7" stroke="#333" stroke-width="1.400"/></svg>
        </div>
        <div class="amount d-flex align-items-center">
            <span>数量(A):</span>
            <div class="numin"><mark>50</mark></div>
            <span>%</span>
        </div>
        <div class="track"></div>
        <div class="thumbtri"></div>
        <fieldset class="dist">
            <legend>分布</legend>
            <label class="radio-row d-flex align-items-center"><input class="form-check-input radio" type="radio" name="dist"><span>平均分布<span class="c-mn">(U)</span></span></label>
            <label class="radio-row d-flex align-items-center"><input class="form-check-input radio" type="radio" name="dist" checked><span>高斯分布<span class="c-mn">(G)</span></span></label>
        </fieldset>
        <label class="check-row mono-row d-flex align-items-center"><input class="form-check-input" type="checkbox" checked><span>单色<span class="c-mn">(M)</span></span></label>
    </div>

    <!-- baidu watermark -->
    <div class="watermark">
        <div class="wm-top">
            <span class="wm-bai">Bai</span>
            <svg class="wm-paw" width="54" height="52" viewBox="0 0 54 52">
                <ellipse cx="11" cy="12" rx="5" ry="7" fill="rgba(255,255,255,.72)"/>
                <ellipse cx="23" cy="6" rx="5" ry="6" fill="rgba(255,255,255,.72)"/>
                <ellipse cx="36" cy="10" rx="5" ry="6.500" fill="rgba(255,255,255,.72)"/>
                <ellipse cx="46" cy="22" rx="4.500" ry="6" fill="rgba(255,255,255,.72)"/>
                <path d="M6 46C0 36 10 30 14 22c4-6 14-6 19 0 4 7 15 12 10 24-5 6-14 4-18 3-5 1-14 3-19-3z" fill="rgba(255,255,255,.72)"/>
                <text x="9" y="43" font-family="Liberation Sans" font-weight="700" font-size="24" fill="#8f8f8f">du</text>
            </svg>
            <span class="wm-jy">经验</span>
        </div>
        <div class="wm-url">jingyan.baidu.com</div>
    </div>
</div>

<script>
    // seeded noise (mulberry32) so each run looks the same
    let seed = 20240;
    function rnd() {
        seed = (seed + 0x6D2B79F5) | 0;
        let t = Math.imul(seed ^ (seed >>> 15), 1 | seed);
        t = (t + Math.imul(t ^ (t >>> 7), 61 | t)) ^ t;
        return ((t ^ (t >>> 14)) >>> 0) / 4294967296;
    }

    // dialog preview: white field with black and grey specks
    const prev = document.getElementById('preview').getContext('2d');
    const prevImg = prev.createImageData(206, 206);
    for (let i = 0; i < prevImg.data.length; i += 4) {
        const r = rnd();
        let v = 255;
        if (r < 0.17) v = 20 + rnd() * 40;
        else if (r < 0.30) v = 110 + rnd() * 50;
        else if (r < 0.42) v = 200 + rnd() * 30;
        prevImg.data[i] = prevImg.data[i + 1] = prevImg.data[i + 2] = v;
        prevImg.data[i + 3] = 255;
    }
    prev.putImageData(prevImg, 0, 0);

    // document: soft gradient background, noisy circle, marching ants
    const dc = document.getElementById('docCanvas').getContext('2d');
    const bg = dc.createRadialGradient(40, 190, 20, 40, 190, 470);
    bg.addColorStop(0, '#8c8c8c');
    bg.addColorStop(0.5, '#7a7a7a');
    bg.addColorStop(1, '#616161');
    dc.fillStyle = bg;
    dc.fillRect(0, 0, 401, 401);
    const cx = 213, cy = 204, rad = 108;
    const img = dc.getImageData(0, 0, 401, 401);
    for (let y = 0; y < 401; y++) {
        for (let x = 0; x < 401; x++) {
            if ((x - cx) * (x - cx) + (y - cy) * (y - cy) <= rad * rad) {
                const v = Math.min(255, 200 + (rnd() + rnd() + rnd() - 1.5) * 85);
                const i = (y * 401 + x) * 4;
                img.data[i] = img.data[i + 1] = img.data[i + 2] = v;
            }
        }
    }
    dc.putImageData(img, 0, 0);
    dc.lineWidth = 1;
    dc.strokeStyle = '#fff';
    dc.beginPath(); dc.arc(cx, cy, rad, 0, Math.PI * 2); dc.stroke();
    dc.strokeStyle = '#000';
    dc.setLineDash([4, 4]);
    dc.beginPath(); dc.arc(cx, cy, rad, 0, Math.PI * 2); dc.stroke();
</script>
<script src="https://cdn.jsdelivr.net/npm/bootstrap@5.3.0/dist/js/bootstrap.bundle.min.js"></script>
</body>
</html>
